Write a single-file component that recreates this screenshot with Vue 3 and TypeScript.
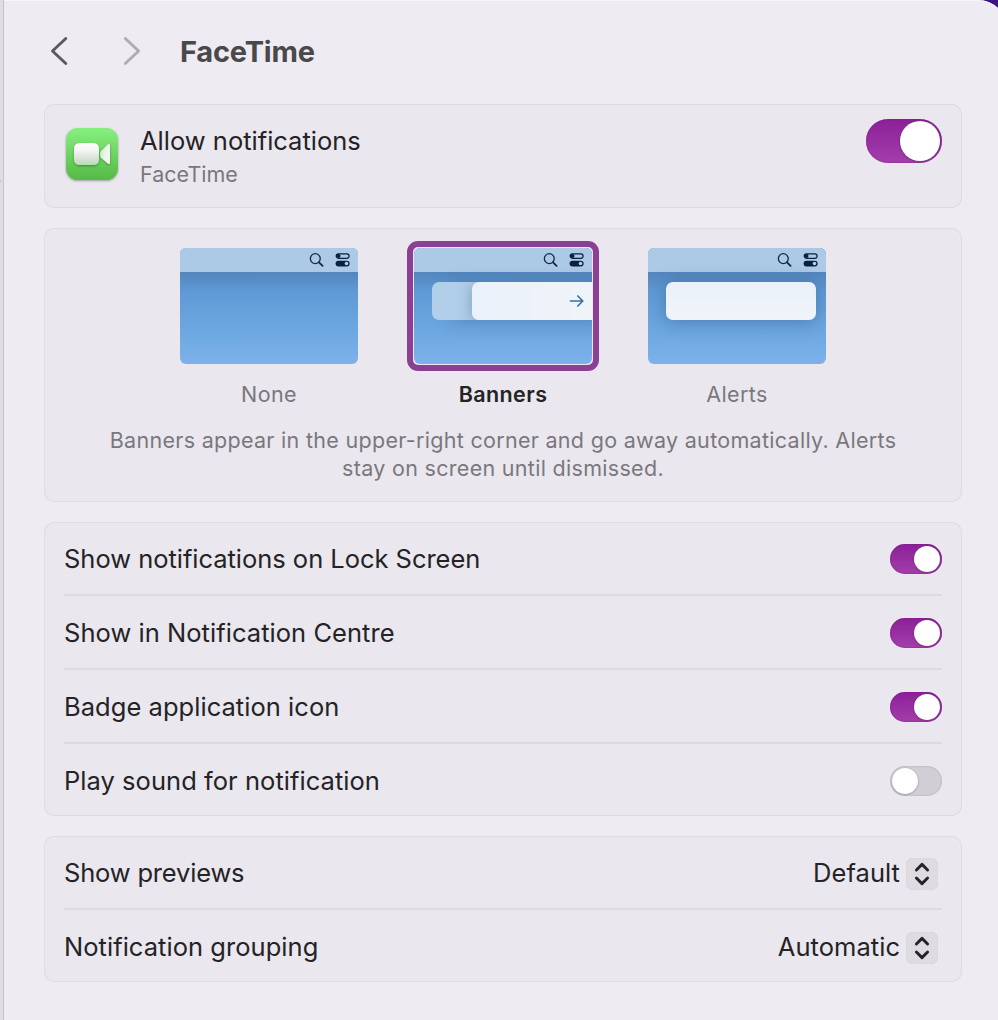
<script setup lang="ts">
import { ref } from 'vue'

type StyleKind = 'none' | 'banners' | 'alerts'

const allow = ref(true)
const selected = ref<StyleKind>('banners')
const styles: { id: StyleKind; label: string }[] = [
  { id: 'none', label: 'None' },
  { id: 'banners', label: 'Banners' },
  { id: 'alerts', label: 'Alerts' },
]
const options = ref([
  { id: 'lock', label: 'Show notifications on Lock Screen', on: true },
  { id: 'centre', label: 'Show in Notification Centre', on: true },
  { id: 'badge', label: 'Badge application icon', on: true },
  { id: 'sound', label: 'Play sound for notification', on: false },
])
const menus = [
  { id: 'previews', label: 'Show previews', value: 'Default' },
  { id: 'grouping', label: 'Notification grouping', value: 'Automatic' },
]
</script>

<template>
  <div class="screen">
    <div class="sidebar-edge"><div class="edge-rule"></div></div>
    <main class="pane">
      <header class="toolbar">
        <svg class="chev" width="20" height="32" viewBox="0 0 20 32">
          <path d="M16.8 3.5 3.5 16l13.3 12.5" fill="none" stroke="#5b595f" stroke-width="2.9" stroke-linecap="round" stroke-linejoin="round" />
        </svg>
        <svg class="chev next" width="20" height="32" viewBox="0 0 20 32">
          <path d="M3.3 3.5 16.6 16 3.3 28.5" fill="none" stroke="#aeabb1" stroke-width="2.9" stroke-linecap="round" stroke-linejoin="round" />
        </svg>
        <h1>FaceTime</h1>
      </header>

      <section class="card allow">
        <svg class="app-icon" width="56" height="58" viewBox="0 0 56 58">
          <defs>
            <linearGradient id="green" x1="0" y1="0" x2="0" y2="1">
              <stop offset="0" stop-color="#86f07f" />
              <stop offset="1" stop-color="#55b945" />
            </linearGradient>
            <linearGradient id="body" x1="0" y1="0" x2="0" y2="1">
              <stop offset="0" stop-color="#ffffff" />
              <stop offset="0.35" stop-color="#f3f4f3" />
              <stop offset="0.75" stop-color="#d5e0d3" />
              <stop offset="1" stop-color="#b4e0ac" />
            </linearGradient>
            <linearGradient id="lens" x1="0" y1="0" x2="1" y2="0.3">
              <stop offset="0" stop-color="#c9ecc4" />
              <stop offset="0.7" stop-color="#f1f5f0" />
            </linearGradient>
            <filter id="soft" x="-20%" y="-20%" width="140%" height="150%">
              <feDropShadow dx="0" dy="1" stdDeviation="0.9" flood-color="#000" flood-opacity="0.33" />
            </filter>
          </defs>
          <rect x="2" y="2" width="52" height="52" rx="11.5" fill="url(#green)" filter="url(#soft)" />
          <g filter="url(#soft)">
            <rect x="10" y="17" width="25" height="22" rx="5.5" fill="url(#body)" />
            <path d="M36.5 25.8 43.5 18.8Q46 16.8 46 19.5V36.5Q46 39.2 43.5 37.2L36.5 31.2Q35.6 28.5 36.5 25.8Z" fill="url(#lens)" />
          </g>
        </svg>
        <div class="allow-text">
          <div class="allow-title">Allow notifications</div>
          <div class="allow-sub">FaceTime</div>
        </div>
        <button class="toggle large" :class="{ on: allow }" aria-label="Allow notifications" @click="allow = !allow"><span></span></button>
      </section>

      <section class="card styles">
        <div class="style-row">
          <div v-for="s in styles" :key="s.id" class="style" :class="{ selected: selected === s.id }" @click="selected = s.id">
            <div class="frame">
              <div class="desk">
                <div class="shade"></div>
                <div class="menubar">
                  <svg width="15" height="16" viewBox="0 0 15 16">
                    <circle cx="6.3" cy="6.6" r="4.95" fill="none" stroke="#10284d" stroke-width="1.3" />
                    <path d="M10 10.3 13.6 13.9" stroke="#10284d" stroke-width="1.8" stroke-linecap="round" />
                  </svg>
                  <svg width="15" height="16" viewBox="0 0 15 16">
                    <rect x="1.2" y="1.9" width="12.9" height="4.4" rx="2.2" fill="none" stroke="#0a1f44" stroke-width="1.2" />
                    <circle cx="3.5" cy="4.1" r="2" fill="#0a1f44" />
                    <rect x="0.6" y="8.700" width="14" height="5.7" rx="2.85" fill="#0a1f44" />
                    <circle cx="11.5" cy="11.55" r="1.8" fill="#b8cee0" />
                  </svg>
                </div>
                <div v-if="s.id === 'alerts'" class="note"></div>
                <div v-if="s.id === 'banners'" class="ghost">
                  <div class="slide">
                    <svg width="16" height="14" viewBox="0 0 16 14">
                      <path d="M1.5 7H13.7M8.8 2 13.8 7 8.8 12" fill="none" stroke="#3a6ea8" stroke-width="1.7" stroke-linecap="round" stroke-linejoin="round" />
                    </svg>
                  </div>
                </div>
              </div>
            </div>
            <div class="caption">{{ s.label }}</div>
          </div>
        </div>
        <p class="hint">Banners appear in the upper-right corner and go away automatically. Alerts<br />stay on screen until dismissed.</p>
      </section>

      <section class="card">
        <div v-for="o in options" :key="o.id" class="row">
          <span class="label" :class="o.id">{{ o.label }}</span>
          <button class="toggle" :class="{ on: o.on }" :aria-label="o.label" @click="o.on = !o.on"><span></span></button>
        </div>
      </section>

      <section class="card">
        <div v-for="m in menus" :key="m.id" class="row">
          <span class="label" :class="m.id">{{ m.label }}</span>
          <div class="select">
            <span class="value">{{ m.value }}</span>
            <div class="stepper">
              <svg width="16" height="24" viewBox="0 0 16 24">
                <path d="M2.4 8 8 2.400 13.6 8M2.4 16 8 21.6 13.6 16" fill="none" stroke="#242326" stroke-width="2.9" stroke-linecap="round" stroke-linejoin="round" />
              </svg>
            </div>
          </div>
        </div>
      </section>
    </main>
  </div>
</template>

<style>
html,
body {
  margin: 0;
  background: #3b1586;
  overflow: hidden;
}
</style>

<style scoped>
* {
  box-sizing: border-box;
}
.screen {
  display: flex;
  width: 1007px;
  height: 1020px;
  overflow: hidden;
  background: #eeebf2;
  border-top-right-radius: 29px;
  box-shadow: inset 0 1px 0 #f8f6fa;
  font-family: Inter, 'Liberation Sans', sans-serif;
  color: #242325;
}
.sidebar-edge {
  width: 4px;
  height: 1020px;
  padding-top: 180px;
  background: #dfdce3;
  border-right: 1px solid #c6c3ca;
}
.edge-rule {
  width: 2px;
  height: 2px;
  background: #cdcad1;
}
.pane {
  display: flex;
  flex-direction: column;
  gap: 20px;
  width: 918px;
  margin-left: 40px;
}
.toolbar {
  display: flex;
  align-items: center;
  height: 84px;
  padding: 18px 0 0 5px;
}
.chev {
  display: block;
}
.next {
  margin-left: 53px;
}
h1 {
  margin: 2px 0 0 38px;
  font-size: 29px;
  line-height: 36px;
  font-weight: 700;
  letter-spacing: -0.2px;
  color: #49484a;
}
.card {
  padding: 0 20px;
  background: #eae7ee;
  border-radius: 10px;
  box-shadow: inset 0 0 0 1px #dedbe2;
}
.allow {
  display: flex;
  height: 104px;
}
.app-icon {
  margin: 22px 0 0;
}
.allow-text {
  flex: 1;
  padding: 20px 0 0 20px;
}
.allow-title {
  font-size: 25.5px;
  line-height: 34px;
}
.allow-sub {
  font-size: 21.5px;
  line-height: 32px;
  color: #7a787c;
}
.toggle {
  flex: none;
  width: 52px;
  height: 30px;
  padding: 2px;
  border: 0;
  border-radius: 22px;
  background: #d1ced5;
  box-shadow: inset 0 0 2px rgba(0, 0, 0, 0.22);
}
.toggle span {
  display: block;
  width: 26px;
  height: 26px;
  border-radius: 50%;
  background: #fff;
  box-shadow: 0 0.5px 2px rgba(0, 0, 0, 0.35);
}
.toggle.on {
  background: linear-gradient(#8b2097, #a33eac);
  box-shadow: inset 0 0 1.5px #7a1488;
}
.toggle.on span {
  margin-left: 22px;
}
.toggle.large {
  width: 76px;
  height: 44px;
  margin-top: 15px;
}
.toggle.large span {
  width: 40px;
  height: 40px;
}
.toggle.large.on span {
  margin-left: 32px;
}
.styles {
  height: 274px;
  padding-top: 13px;
}
.style-row {
  display: flex;
  justify-content: center;
  gap: 42px;
}
.style {
  width: 192px;
}
.frame {
  height: 130px;
  padding: 7px;
  border-radius: 11px;
}
.selected .frame {
  background: #f0e4f4;
  box-shadow: inset 0 0 0 6px #8a4194;
}
.desk {
  position: relative;
  height: 116px;
  overflow: hidden;
  border-radius: 6px;
  background: linear-gradient(#5a93d0 24px, #5f99d6 42px, #70aae2 90px, #7eb1eb 116px);
}
.shade {
  position: absolute;
  inset: 24px 0 auto;
  height: 20px;
  background: linear-gradient(rgba(60, 95, 125, 0.24), rgba(60, 95, 125, 0));
}
.menubar {
  display: flex;
  justify-content: flex-end;
  align-items: center;
  gap: 11px;
  height: 24px;
  padding-right: 8px;
  background: #acc9e5;
}
.note,
.ghost {
  position: absolute;
  top: 34px;
  left: 18px;
  height: 38px;
}
.note {
  width: 150px;
  border-radius: 7px;
  background: linear-gradient(#ebf1fb, #eef4f7);
  box-shadow: 0 2px 18px rgba(20, 55, 95, 0.34);
}
.ghost {
  width: 160px;
  padding-left: 40px;
  border-radius: 7px 0 0 7px;
  background: #b2cfea;
  box-shadow: 20px 2px 18px rgba(20, 55, 95, 0.25);
  overflow: hidden;
}
.slide {
  display: flex;
  align-items: center;
  justify-content: flex-end;
  height: 38px;
  padding-right: 7px;
  border-radius: 7px 0 0 7px;
  background: linear-gradient(90deg, #ebf1fb, #eff4f9);
  box-shadow: 0 2px 16px rgba(20, 55, 95, 0.34);
}
.caption {
  margin-top: 7px;
  font-size: 21.5px;
  line-height: 32px;
  letter-spacing: 0.4px;
  text-align: center;
  color: #7a787c;
}
.selected .caption {
  font-weight: 600;
  color: #242325;
}
.hint {
  margin: 16px 0 0;
  font-size: 21.5px;
  line-height: 28px;
  letter-spacing: 0.3px;
  text-align: center;
  white-space: nowrap;
  color: #7a787c;
}
.row {
  display: flex;
  align-items: center;
  justify-content: space-between;
  height: 74px;
  padding-top: 2px;
  border-bottom: 2px solid #dddae1;
  font-size: 25.5px;
}
.row:last-child {
  height: 72px;
  border-bottom: 0;
}
.label,
.value {
  margin-bottom: 2px;
  letter-spacing: 0.04px;
}
.lock {
  letter-spacing: -0.03px;
}
.previews {
  letter-spacing: -0.18px;
}
.select {
  display: flex;
  align-items: center;
  gap: 6px;
  padding-right: 4px;
}
.stepper {
  display: grid;
  place-items: center;
  width: 32px;
  height: 32px;
  margin-top: 2px;
  border-radius: 7px;
  background: #dedbe1;
  box-shadow: inset 0 0 1px rgba(0, 0, 0, 0.15);
}
</style>
